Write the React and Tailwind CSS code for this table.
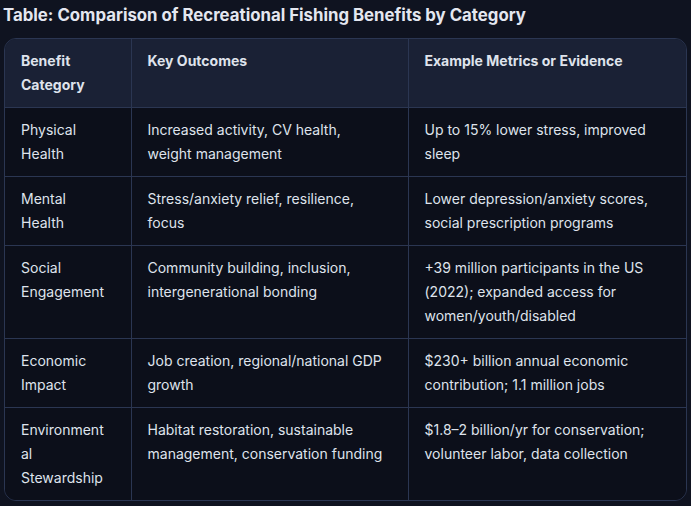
export default function App() {
  const rows = [
    ["Physical Health", "Increased activity, CV health, weight management", "Up to 15% lower stress, improved sleep"],
    ["Mental Health", "Stress/anxiety relief, resilience, focus", "Lower depression/anxiety scores, social prescription programs"],
    ["Social Engagement", "Community building, inclusion, intergenerational bonding", "+39 million participants in the US (2022); expanded access for women/youth/disabled"],
    ["Economic Impact", "Job creation, regional/national GDP growth", "$230+ billion annual economic contribution; 1.1 million jobs"],
    ["Environmental Stewardship", "Habitat restoration, sustainable management, conservation funding", "$1.8–2 billion/yr for conservation; volunteer labor, data collection"],
  ];
  return (
    <div className="w-[691px] h-[506px] bg-[#0f1320] overflow-hidden" style={{ fontFamily: "Inter, 'Noto Sans', sans-serif" }}>
      <h2 className="pl-[3px] pt-[4px] h-[38px] text-[16.8px] font-bold text-[#e4e7f0] leading-[22px]">
        Table: Comparison of Recreational Fishing Benefits by Category
      </h2>
      <div className="mx-[4px] rounded-[12px] border border-[#2b3652] overflow-hidden">
        <table className="w-full border-collapse text-[14px] leading-[24px] text-[#dfe3ec] table-fixed">
          <colgroup>
            <col className="w-[126px]" />
            <col className="w-[277px]" />
            <col />
          </colgroup>
          <thead>
            <tr className="bg-[#1a2135]">
              <th className="text-left font-bold align-top pl-[16px] pr-[24px] py-[10px] border-r border-[#2b3652] break-words">Benefit Category</th>
              <th className="text-left font-bold align-top pl-[16px] pr-[22px] py-[10px] border-r border-[#2b3652]">Key Outcomes</th>
              <th className="text-left font-bold align-top px-[16px] py-[10px]">Example Metrics or Evidence</th>
            </tr>
          </thead>
          <tbody className="bg-[#0c0f1a]">
            {rows.map((r, i) => (
              <tr key={i} className="border-t border-[#2b3652]">
                <td className="align-top pl-[16px] pr-[24px] py-[10px] border-r border-[#2b3652] break-words">{r[0]}</td>
                <td className="align-top pl-[16px] pr-[22px] py-[10px] border-r border-[#2b3652]">{r[1]}</td>
                <td className="align-top px-[16px] py-[10px]">{r[2]}</td>
              </tr>
            ))}
          </tbody>
        </table>
      </div>
    </div>
  );
}
